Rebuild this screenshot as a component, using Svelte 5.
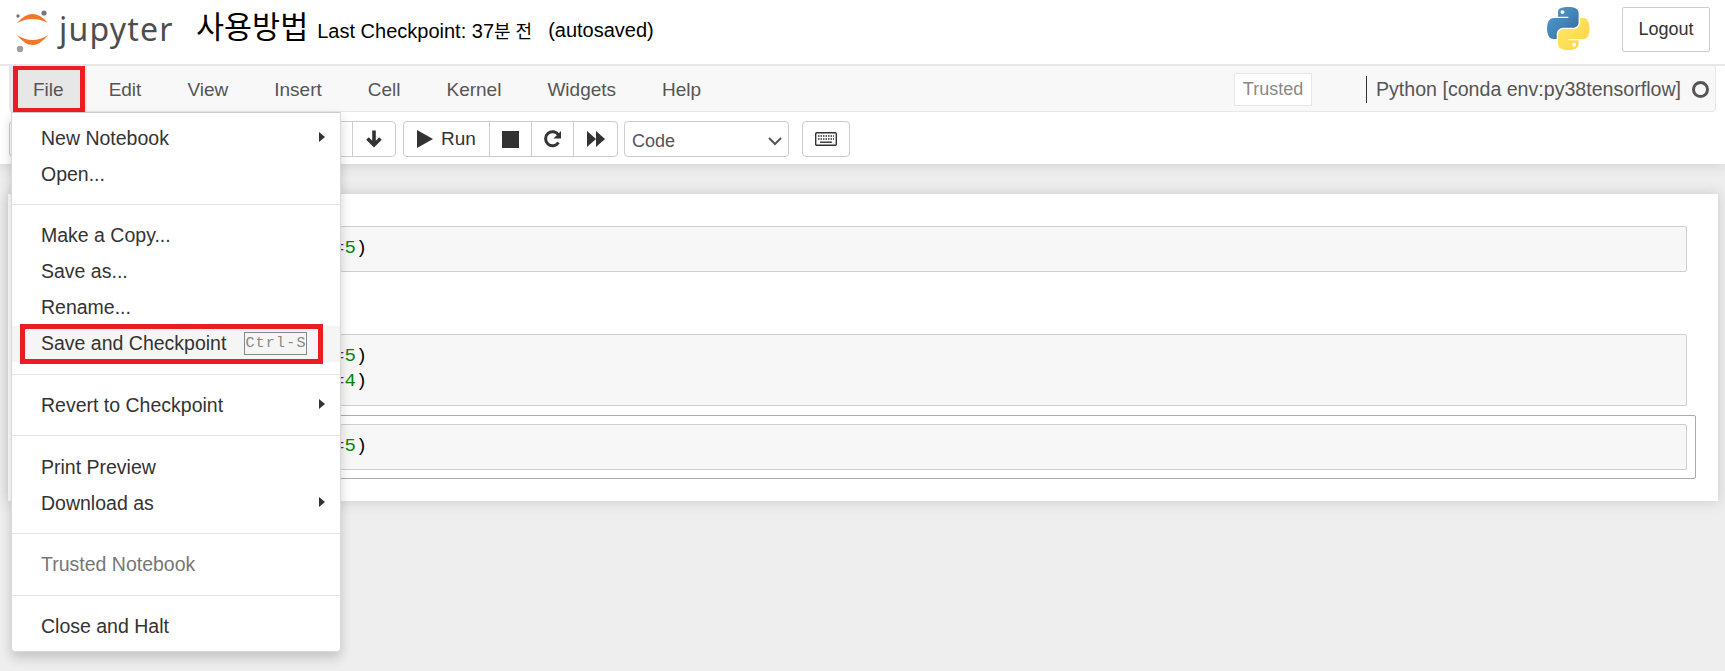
<script>
	const topMenus = ['Edit', 'View', 'Insert', 'Cell', 'Kernel', 'Widgets', 'Help'];

	// each group of the File dropdown, split by a divider
	const fileMenu = [
		[{ label: 'New Notebook', sub: true }, { label: 'Open...' }],
		[
			{ label: 'Make a Copy...' },
			{ label: 'Save as...' },
			{ label: 'Rename...' },
			{ label: 'Save and Checkpoint', kbd: 'Ctrl-S', marked: true }
		],
		[{ label: 'Revert to Checkpoint', sub: true }],
		[{ label: 'Print Preview' }, { label: 'Download as', sub: true }],
		[{ label: 'Trusted Notebook', disabled: true }],
		[{ label: 'Close and Halt' }]
	];

	const cells = [
		{ lines: ['5'] },
		{ lines: ['5', '4'], gap: true },
		{ lines: ['5'], selected: true }
	];
</script>

<div class="page">
	<header class="site">
		<div class="brand">
			<svg class="logo" viewBox="15 5 40 46" width="40" height="46" aria-hidden="true">
				<path d="M17 21Q32.5 3 48 21Q32.5 13 17 21Z" fill="#f37726" />
				<path d="M17 33Q32.5 43 48 33Q32.5 53 17 33Z" fill="#f37726" />
				<circle cx="44" cy="11" r="2.6" fill="#767677" />
				<circle cx="18" cy="14" r="1.7" fill="#767677" />
				<circle cx="20" cy="47" r="3.2" fill="#9e9e9e" />
			</svg>
			<span class="wordmark">jupyter</span>
		</div>
		<span class="title">사용방법</span>
		<span class="checkpoint">Last Checkpoint: 37<span class="ago">분 전</span></span>
		<span class="autosaved">(autosaved)</span>
		<svg class="python" viewBox="0 0 112 112" width="43" height="43" aria-hidden="true">
			<defs>
				<linearGradient id="pyblue" x1="0" y1="0" x2="1" y2="1">
					<stop offset="0" stop-color="#5a9fd4" />
					<stop offset="1" stop-color="#306998" />
				</linearGradient>
				<linearGradient id="pyyellow" x1="0" y1="0" x2="1" y2="1">
					<stop offset="0" stop-color="#ffe873" />
					<stop offset="1" stop-color="#ffd43b" />
				</linearGradient>
			</defs>
			<path
				fill="url(#pyblue)"
				d="M54.919 0.001c-4.584.022-8.961.413-12.813 1.095C30.76 3.099 28.7 7.295 28.7 15.032v10.219h26.813v3.406H18.638c-7.793 0-14.616 4.684-16.75 13.594-2.462 10.213-2.571 16.586 0 27.25 1.906 7.938 6.457 13.594 14.25 13.594h9.219v-12.25c0-8.85 7.657-16.656 16.75-16.656h26.781c7.454 0 13.406-6.138 13.406-13.625V15.032c0-7.266-6.13-12.725-13.406-13.937C64.282.328 59.502-.02 54.919.001zM40.419 8.219c2.77 0 5.031 2.299 5.031 5.125 0 2.816-2.262 5.094-5.031 5.094-2.779 0-5.031-2.277-5.031-5.094 0-2.826 2.252-5.125 5.031-5.125z"
			/>
			<path
				fill="url(#pyyellow)"
				d="M85.638 28.657v11.906c0 9.231-7.826 17-16.75 17H42.106c-7.336 0-13.406 6.278-13.406 13.625v25.531c0 7.266 6.319 11.54 13.406 13.625 8.487 2.496 16.626 2.947 26.781 0 6.75-1.954 13.406-5.888 13.406-13.625V86.501H55.513v-3.405H95.7c7.793 0 10.696-5.436 13.406-13.594 2.8-8.399 2.68-16.476 0-27.25-1.926-7.757-5.604-13.594-13.406-13.594zM70.575 93.313c2.779 0 5.031 2.277 5.031 5.094 0 2.826-2.252 5.125-5.031 5.125-2.77 0-5.031-2.299-5.031-5.125 0-2.816 2.262-5.094 5.031-5.094z"
			/>
		</svg>
		<button class="logout">Logout</button>
	</header>

	<div class="chrome">
		<nav class="menubar">
			<div class="menu-item file">File</div>
			{#each topMenus as m}
				<div class="menu-item">{m}</div>
			{/each}
			<div class="spacer"></div>
			<span class="trusted">Trusted</span>
			<span class="kernel">Python [conda env:py38tensorflow]</span>
			<span class="kernel-dot"></span>
		</nav>

		<div class="toolbar">
			<div class="btn-group left-group">
				<button class="tool wide"></button>
				<button class="tool down" aria-label="move cell down">
					<svg viewBox="0 0 20 20" width="20" height="20">
						<path d="M10 1.5v14M3.5 9.5l6.5 6.5 6.5-6.5" fill="none" stroke="#333" stroke-width="3.6" />
					</svg>
				</button>
			</div>
			<div class="btn-group">
				<button class="tool run" aria-label="run">
					<svg viewBox="0 0 16 18" width="16" height="18"><path d="M0 0l16 9-16 9z" fill="#333" /></svg>
					<span>Run</span>
				</button>
				<button class="tool stop" aria-label="stop">
					<svg viewBox="0 0 17 17" width="17" height="17"><rect width="17" height="17" fill="#333" /></svg>
				</button>
				<button class="tool restart" aria-label="restart">
					<svg viewBox="0 0 20 20" width="20" height="20">
						<path d="M15.5 13.5a7 7 0 1 1 0-7.5" fill="none" stroke="#333" stroke-width="3" />
						<path d="M18 2v7.5h-7.5z" fill="#333" />
					</svg>
				</button>
				<button class="tool forward" aria-label="run all">
					<svg viewBox="0 0 18 16" width="18" height="16">
						<path d="M0 0l9 8-9 8zM9 0l9 8-9 8z" fill="#333" />
					</svg>
				</button>
			</div>
			<div class="cell-type">
				<span>Code</span>
				<svg viewBox="0 0 14 9" width="14" height="9">
					<path d="M1 1l6 6 6-6" fill="none" stroke="#555" stroke-width="2" />
				</svg>
			</div>
			<button class="tool keyboard" aria-label="command palette">
				<svg viewBox="0 0 22 14" width="22" height="14">
					<rect x="0.7" y="0.7" width="20.6" height="12.6" rx="1" fill="none" stroke="#333" stroke-width="1.4" />
					<path d="M3 4h16M3 7h16" stroke="#333" stroke-width="1.4" stroke-dasharray="1.5 1" fill="none" />
					<path d="M5 10.2h12" stroke="#333" stroke-width="1.4" fill="none" />
				</svg>
			</button>
		</div>
	</div>

	<main class="site-body">
		<section class="notebook">
			{#each cells as c}
				<div class="cell" class:selected={c.selected} class:spaced={c.gap}>
					<div class="input">
						{#each c.lines as n}
							<div class="line"><span class="op">=</span><span class="num">{n}</span><span class="paren">)</span></div>
						{/each}
					</div>
				</div>
				{#if !c.gap && !c.selected}
					<div class="output"></div>
				{/if}
			{/each}
		</section>
	</main>

	<div class="dropdown">
		{#each fileMenu as group, i}
			{#if i > 0}
				<div class="divider"></div>
			{/if}
			{#each group as item}
				<div class="drop-item" class:marked={item.marked} class:disabled={item.disabled}>
					<span>{item.label}</span>
					{#if item.kbd}
						<span class="kbd">{item.kbd}</span>
					{/if}
					{#if item.sub}
						<i class="caret"></i>
					{/if}
				</div>
			{/each}
		{/each}
	</div>
</div>

<style>
	:global(body) {
		margin: 0;
		background: #eee;
	}

	.page {
		position: relative;
		width: 1725px;
		height: 671px;
		overflow: hidden;
		background: #eee;
		font-family: 'Liberation Sans', Arial, sans-serif;
		color: #333;
	}

	button {
		font: inherit;
		color: inherit;
	}

	.site {
		position: relative;
		z-index: 1;
		display: flex;
		align-items: center;
		background: #fff;
		border-bottom: 2px solid #e7e7e7;
		box-sizing: border-box;
		height: 66px;
	}

	.brand {
		display: flex;
		align-items: center;
		margin-left: 15px;
		width: 181px;
	}

	.logo {
		margin-top: -5px;
	}

	.wordmark {
		margin-left: 4px;
		margin-top: -7px;
		font-family: 'Noto Sans', sans-serif;
		font-size: 32px;
		letter-spacing: 1.2px;
		color: #4e4e4e;
	}

	.title {
		font-family: 'Noto Sans CJK KR', sans-serif;
		font-size: 30.5px;
		color: #000;
		margin-top: -14px;
	}

	.checkpoint,
	.autosaved {
		font-family: 'Liberation Sans', 'Noto Sans CJK KR', sans-serif;
		font-size: 20px;
		color: #000;
		margin-top: -4px;
	}

	.checkpoint {
		margin-left: 9px;
	}

	.ago {
		font-size: 18px;
	}

	.autosaved {
		margin-left: 16px;
	}

	.python {
		margin-left: auto;
		margin-right: 32px;
		margin-top: -8px;
	}

	.logout {
		width: 88px;
		height: 45px;
		margin-right: 15px;
		margin-top: -5px;
		background: #fff;
		border: 1px solid #ccc;
		border-radius: 2px;
		font-size: 18px;
		color: #333;
		padding: 0;
	}

	.chrome {
		background: #fff;
		height: 98px;
		box-shadow: 0 0 12px 1px rgba(87, 87, 87, 0.2);
		position: relative;
		padding: 0 9px;
	}

	.menubar {
		display: flex;
		align-items: center;
		height: 46px;
		padding-top: 2px;
		background: #f8f8f8;
		border: 1px solid #e7e7e7;
		border-top: 0;
		border-radius: 0 0 4px 4px;
		box-sizing: border-box;
		width: 1707px;
	}

	.menu-item {
		position: relative;
		padding: 0 23px;
		line-height: 45px;
		font-size: 19px;
		color: #555;
	}

	.file {
		background: #e7e7e7;
		margin-top: -2px;
		padding-top: 2px;
		margin-right: -1px;
	}

	/* red annotation drawn over the screenshot */
	.file::after {
		content: '';
		position: absolute;
		top: 0;
		bottom: -1px;
		left: 3px;
		right: 2px;
		border: 5px solid #ed1c24;
	}

	.spacer {
		flex: 1;
	}

	.trusted {
		box-sizing: border-box;
		width: 78px;
		height: 33px;
		line-height: 31px;
		text-align: center;
		border: 1px solid #e7e7e7;
		background: #fff;
		font-size: 18px;
		color: #888;
		margin-right: 54px;
	}

	.kernel {
		border-left: 1px solid #333;
		padding-left: 9px;
		height: 27px;
		line-height: 27px;
		font-size: 19.6px;
		color: #555;
	}

	.kernel-dot {
		box-sizing: border-box;
		width: 17px;
		height: 17px;
		border: 3px solid #555;
		border-radius: 50%;
		margin: 0 6px 0 11px;
	}

	.toolbar {
		display: flex;
		align-items: center;
		height: 52px;
		padding-top: 2px;
		box-sizing: border-box;
	}

	.btn-group {
		display: flex;
		height: 36px;
		margin-right: 7px;
	}

	.tool {
		display: flex;
		align-items: center;
		justify-content: center;
		height: 36px;
		padding: 0;
		background: #fff;
		border: 1px solid #ccc;
		box-sizing: border-box;
	}

	.btn-group .tool + .tool {
		margin-left: -1px;
	}

	.btn-group .tool:first-child {
		border-radius: 4px 0 0 4px;
	}

	.btn-group .tool:last-child {
		border-radius: 0 4px 4px 0;
	}

	.wide {
		width: 344px;
	}

	.down {
		width: 44px;
	}

	.run {
		width: 87px;
		gap: 8px;
		font-size: 19px;
	}

	.stop {
		width: 43px;
	}

	.restart {
		width: 43px;
	}

	.forward {
		width: 45px;
	}

	.cell-type {
		display: flex;
		align-items: center;
		justify-content: space-between;
		box-sizing: border-box;
		width: 165px;
		height: 36px;
		padding: 4px 6px 0 7px;
		margin-left: -1px;
		border: 1px solid #ccc;
		border-radius: 4px;
		font-size: 18px;
		color: #555;
		margin-right: 13px;
	}

	.keyboard {
		width: 48px;
		border-radius: 4px;
	}

	.site-body {
		padding: 30px 7px 0 8px;
	}

	.notebook {
		background: #fff;
		box-shadow: 0 0 12px 1px rgba(87, 87, 87, 0.2);
		padding: 23px 22px 22px 21px;
	}

	.cell {
		box-sizing: border-box;
		padding: 8px;
		border: 1px solid transparent;
		border-radius: 2px;
	}

	.cell.selected {
		border-color: #ababab;
	}

	.output {
		height: 44px;
	}

	.input {
		box-sizing: border-box;
		margin-left: 110px;
		padding: 9px 0 10px 184px;
		background: #f7f7f7;
		border: 1px solid #cfcfcf;
		border-radius: 2px;
	}

	.cell.spaced .input {
		padding-bottom: 11px;
	}

	.line {
		height: 25px;
		line-height: 25px;
		font-family: 'Liberation Mono', monospace;
		font-size: 19px;
	}

	.op {
		color: #7216ab;
	}

	.num {
		color: #080;
	}

	.paren {
		color: #000;
	}

	.dropdown {
		position: absolute;
		z-index: 2;
		left: 11px;
		top: 112px;
		width: 330px;
		box-sizing: border-box;
		padding: 7px 0;
		background: #fff;
		border: 1px solid rgba(0, 0, 0, 0.15);
		border-top-color: #ccc;
		border-radius: 0 0 4px 4px;
		box-shadow: 0 6px 12px rgba(0, 0, 0, 0.175);
	}

	.divider {
		height: 1px;
		margin: 12px 0 12.7px;
		background: #e5e5e5;
	}

	.drop-item {
		position: relative;
		display: flex;
		align-items: center;
		height: 36px;
		padding-left: 29px;
		font-size: 19.5px;
		color: #333;
	}

	.drop-item.disabled {
		color: #777;
	}

	.drop-item.marked {
		background: #f5f5f5;
	}

	/* red annotation drawn over the screenshot */
	.drop-item.marked::after {
		content: '';
		position: absolute;
		top: -2px;
		bottom: -2px;
		left: 8px;
		right: 17px;
		border: 5px solid #ed1c24;
	}

	.kbd {
		box-sizing: border-box;
		width: 63px;
		height: 23px;
		line-height: 21px;
		margin-left: 18px;
		text-align: center;
		white-space: nowrap;
		border: 1px solid #888;
		font-family: 'Liberation Mono', monospace;
		font-size: 15px;
		letter-spacing: 1.2px;
		color: #888;
	}

	.caret {
		position: absolute;
		right: 15px;
		top: 12px;
		border-left: 6px solid #333;
		border-top: 5.5px solid transparent;
		border-bottom: 5.5px solid transparent;
	}
</style>
